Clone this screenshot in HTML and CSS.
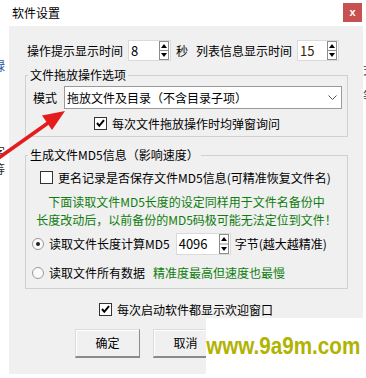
FILE: index.html
```html
<!DOCTYPE html>
<html lang="zh-CN">
<head>
<meta charset="utf-8">
<title>软件设置</title>
<link rel="stylesheet" href="styles.css">
</head>
<body>
<span class="frag fl1">禄</span>
<span class="frag fl2">字</span>
<span class="frag fl3">等</span>
<span class="frag fr1">式</span>
<span class="frag fr2">等</span>

<div class="window">
  <div class="titlebar">
    <span class="title">软件设置</span>
    <span class="close">x</span>
  </div>
  <div class="body">
    <div class="toprow">
      <span class="lbl">操作提示显示时间</span>
      <div class="spin s1">
        <span class="val">8</span>
        <svg class="updown" width="10" height="19" viewBox="0 0 10 19"><rect x="0.5" y="0.5" width="9" height="18" fill="#fff" stroke="#8c8c8c"/><line x1="0" y1="9.5" x2="10" y2="9.5" stroke="#8c8c8c"/><path d="M5 3 L8 7 L2 7Z" fill="#000"/><path d="M5 16 L8 12 L2 12Z" fill="#000"/></svg>
      </div>
      <span class="sec">秒</span>
      <span class="lbl lbl2">列表信息显示时间</span>
      <div class="spin s2">
        <span class="val">15</span>
        <svg class="updown" width="10" height="19" viewBox="0 0 10 19"><rect x="0.5" y="0.5" width="9" height="18" fill="#fff" stroke="#8c8c8c"/><line x1="0" y1="9.5" x2="10" y2="9.5" stroke="#8c8c8c"/><path d="M5 3 L8 7 L2 7Z" fill="#000"/><path d="M5 16 L8 12 L2 12Z" fill="#000"/></svg>
      </div>
    </div>

    <fieldset class="group g1">
      <legend>文件拖放操作选项</legend>
      <div class="moderow">
        <span class="lbl">模式</span>
        <div class="combo">
          <span class="ctext">拖放文件及目录（不含目录子项）</span>
          <svg class="chev" width="9" height="5" viewBox="0 0 9 5"><polyline points="0.5,0.5 4.5,4.5 8.5,0.5" fill="none" stroke="#555" stroke-width="1"/></svg>
        </div>
      </div>
      <div class="crow c1">
        <span class="cb"><svg width="11" height="11" viewBox="0 0 11 11"><polyline points="2,5 4.3,7.8 9,2.2" fill="none" stroke="#000" stroke-width="2"/></svg></span>
        <span class="clbl">每次文件拖放操作时均弹窗询问</span>
      </div>
    </fieldset>

    <fieldset class="group g2">
      <legend>生成文件MD5信息（影响速度）</legend>
      <div class="crow c2">
        <span class="cb"></span>
        <span class="clbl">更名记录是否保存文件MD5信息(可精准恢复文件名)</span>
      </div>
      <div class="note">
        <div>下面读取文件MD5长度的设定同样用于文件名备份中</div>
        <div>长度改动后，以前备份的MD5码极可能无法定位到文件！</div>
      </div>
      <div class="rrow r1">
        <span class="radio on"></span>
        <span class="rlbl">读取文件长度计算MD5</span>
        <div class="spin s3">
          <span class="val">4096</span>
          <svg class="updown" width="10" height="20" viewBox="0 0 10 20"><rect x="0.5" y="0.5" width="9" height="19" fill="#fff" stroke="#8c8c8c"/><line x1="0" y1="10" x2="10" y2="10" stroke="#8c8c8c"/><path d="M5 3 L8 7 L2 7Z" fill="#000"/><path d="M5 17 L8 13 L2 13Z" fill="#000"/></svg>
        </div>
        <span class="unit">字节(越大越精准)</span>
      </div>
      <div class="rrow r2">
        <span class="radio"></span>
        <span class="rlbl">读取文件所有数据</span>
        <span class="green">精准度最高但速度也最慢</span>
      </div>
    </fieldset>

    <div class="crow c3">
      <span class="cb"><svg width="11" height="11" viewBox="0 0 11 11"><polyline points="2,5 4.3,7.8 9,2.2" fill="none" stroke="#000" stroke-width="2"/></svg></span>
      <span class="clbl">每次启动软件都显示欢迎窗口</span>
    </div>

    <div class="buttons">
      <span class="btn">确定</span>
      <span class="btn">取消</span>
    </div>
  </div>
</div>

<svg class="arrow" width="80" height="70" viewBox="0 0 80 70">
  <line x1="-2" y1="58.5" x2="48" y2="23" stroke="#e41c1c" stroke-width="3.6" stroke-linecap="round"/>
  <polygon points="65,11 42,15.5 52,30" fill="#e41c1c"/>
</svg>

<div class="watermark"><span class="wtext">www.9a9m.com</span></div>
</body>
</html>
```

FILE: styles.css
```css
html, body {
  margin: 0;
  padding: 0;
}
body {
  width: 366px;
  height: 378px;
  overflow: hidden;
  position: relative;
  background: #ffffff;
  font-family: "Noto Sans CJK SC", "Microsoft YaHei", sans-serif;
  font-size: 12px;
  line-height: 16px;
  color: #000;
}

.frag {
  position: absolute;
  font-size: 12px;
  line-height: 12px;
  color: #2a2a2a;
}
.fl1 { left: -7px; top: 60px; color: #2856a8; }
.fl2 { left: -7px; top: 146px; }
.fl3 { left: -7px; top: 163px; }
.fr1 { left: 363px; top: 64px; color: #3a2a6a; }
.fr2 { left: 363px; top: 90px; color: #2a3a6a; }

.window {
  margin-left: 9px;
  width: 354px;
  position: relative;
}

.titlebar {
  height: 26px;
  background: #ffffff;
  display: flex;
  justify-content: space-between;
  align-items: flex-start;
}
.title {
  padding-left: 3px;
  line-height: 26px;
}
.close {
  margin-top: 3px;
  margin-right: 1px;
  width: 19px;
  height: 19px;
  background: #c75050;
  color: #fff;
  font-family: "Liberation Sans", Arial, sans-serif;
  font-weight: bold;
  font-size: 11px;
  line-height: 18px;
  text-align: center;
}

.body {
  background: #f0f0f0;
  height: 348px;
  box-sizing: border-box;
  padding-top: 14px;
}

.toprow {
  display: flex;
  align-items: center;
  height: 21px;
  padding-left: 18px;
}
.toprow .lbl { width: 96px; white-space: nowrap; }
.sec { margin-left: 5px; }
.toprow .lbl2 { margin-left: 8px; }

.spin {
  display: flex;
  align-items: center;
  justify-content: space-between;
  box-sizing: border-box;
  background: #fff;
  border: 1px solid #dadada;
}
.spin .val {
  padding-left: 2px;
  font-size: 13px;
}
.spin .updown { margin-right: 1px; }
.s1 { width: 43px; height: 21px; margin-left: 5px; }
.s2 { width: 42px; height: 21px; margin-left: 5px; }
.s2 .val { color: #3a2200; }
.s3 { width: 55px; height: 22px; margin-left: 6px; }

.group {
  margin: 0 0 0 16px;
  padding: 0 0 6px 0;
  width: 323px;
  box-sizing: border-box;
  min-width: 0;
  border: 1px solid #d0d0d0;
}
.group legend {
  padding: 0 2px;
  margin-left: 2px;
  line-height: 16px;
  font-size: 12px;
}
.g1 { margin-top: 6px; }
.g2 { margin-top: 10px; padding-bottom: 7px; }

.moderow {
  display: flex;
  align-items: center;
  margin-top: 3px;
  padding-left: 7px;
}
.combo {
  margin-left: 7px;
  width: 278px;
  height: 23px;
  box-sizing: border-box;
  background: #fff;
  border: 1px solid #9a9a9a;
  display: flex;
  align-items: center;
  justify-content: space-between;
}
.ctext { padding-left: 2px; }
.chev { margin-right: 4px; }

.crow {
  display: flex;
  align-items: center;
  height: 13px;
}
.cb {
  width: 13px;
  height: 13px;
  box-sizing: border-box;
  border: 1px solid #333;
  background: #fff;
  display: flex;
  align-items: center;
  justify-content: center;
  flex: none;
}
.clbl { margin-left: 5px; white-space: nowrap; }
.c1 { margin-top: 8px; padding-left: 68px; }
.c2 { margin-top: 8px; padding-left: 14px; }
.c3 { margin-top: 14px; padding-left: 90px; }

.note {
  margin-top: 9px;
  text-align: center;
  color: #0e7d0e;
  line-height: 18px;
  white-space: nowrap;
}

.rrow {
  display: flex;
  align-items: center;
  padding-left: 6px;
}
.r1 { margin-top: 4px; height: 22px; }
.r2 { margin-top: 10px; height: 16px; }
.radio {
  width: 12px;
  height: 12px;
  box-sizing: border-box;
  border: 1px solid #9a9a9a;
  border-radius: 50%;
  background: #fafafa;
  display: flex;
  align-items: center;
  justify-content: center;
  flex: none;
}
.radio.on::after {
  content: "";
  width: 4px;
  height: 4px;
  border-radius: 50%;
  background: #222;
}
.rlbl { margin-left: 5px; white-space: nowrap; }
.unit { margin-left: 4px; white-space: nowrap; }
.green { margin-left: 8px; color: #0e7d0e; white-space: nowrap; }

.buttons {
  display: flex;
  gap: 13px;
  margin-top: 13px;
  padding-left: 66px;
}
.btn {
  width: 65px;
  height: 29px;
  box-sizing: border-box;
  background: #f0f0f0;
  border-top: 1px solid #dcdcdc;
  border-left: 1px solid #dcdcdc;
  border-right: 1px solid #8a8a8a;
  border-bottom: 2px solid #8a8a8a;
  box-shadow: inset 1px 1px #ffffff;
  display: flex;
  align-items: center;
  justify-content: center;
}

.arrow {
  position: absolute;
  left: 0;
  top: 100px;
}

.watermark {
  position: absolute;
  left: 206px;
  top: 318px;
  width: 160px;
  height: 60px;
  background: #ffffff;
  overflow: hidden;
  box-sizing: border-box;
  padding-top: 16px;
}
.wtext {
  display: inline-block;
  font-family: "Liberation Sans", Arial, sans-serif;
  font-weight: bold;
  font-size: 24px;
  line-height: 24px;
  color: #b0b300;
  white-space: nowrap;
  transform: scaleX(0.86);
  transform-origin: 1px 0;
}
```
